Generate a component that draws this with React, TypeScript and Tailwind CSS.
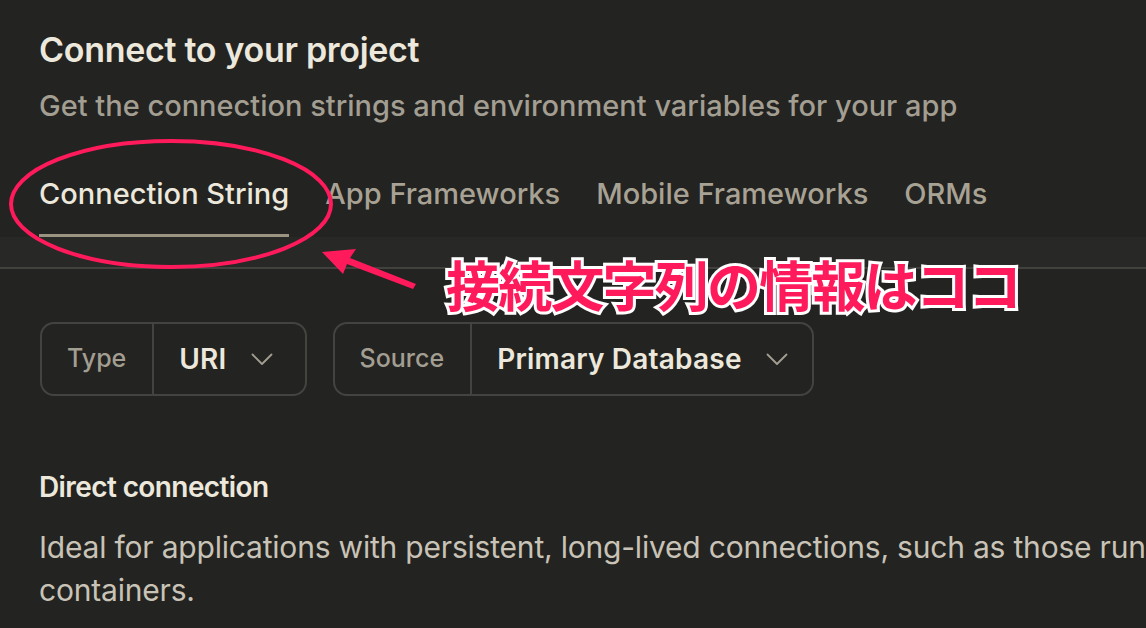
const tabs = ['Connection String', 'App Frameworks', 'Mobile Frameworks', 'ORMs']

function Chevron() {
  return (
    <svg width="22" height="13" viewBox="0 0 22 13" fill="none" className="shrink-0">
      <polyline points="1.5,1.5 11,11 20.5,1.5" stroke="#a39e92" strokeWidth="1.8" strokeLinecap="round" strokeLinejoin="round" />
    </svg>
  )
}

function Selector({ label, value, pr }: { label: string; value: string; pr: string }) {
  return (
    <div className="flex h-[74px] items-stretch rounded-[14px] border-2 border-[#434340]">
      <div className="flex items-center pl-[25px] pr-[26px] text-[25px] font-medium text-[#a39e92]">{label}</div>
      <div className={`flex items-center gap-[24px] border-l-2 border-[#434340] pl-[25px] ${pr}`}>
        <span className="text-[28px] font-semibold tracking-[0.2px] text-[#ede8dc]">{value}</span>
        <Chevron />
      </div>
    </div>
  )
}

export default function App() {
  return (
    <div
      className="relative h-[628px] w-[1146px] overflow-hidden bg-[#232321]"
      style={{ fontFamily: 'Inter, "Noto Sans", sans-serif' }}
    >
      <div className="px-[39px] pt-[30px]">
        <h1 className="text-[34px] font-semibold leading-[40px] tracking-[-0.3px] text-[#ede8dc]">
          Connect to your project
        </h1>
        <p className="mt-[18px] text-[29px] font-medium leading-[36px] text-[#a39e92]">
          Get the connection strings and environment variables for your app
        </p>
      </div>

      <div className="mt-[52px] flex gap-[36px] px-[39px]">
        {tabs.map((t, i) => (
          <div
            key={t}
            className={
              i === 0
                ? 'border-b-[3px] border-[#9b9382] pb-[22px] text-[29px] font-medium leading-[36px] text-[#ede8dc]'
                : 'pb-[25px] text-[29px] font-medium leading-[36px] text-[#a8a294]'
            }
          >
            {t}
          </div>
        ))}
      </div>
      <div className="h-[32px] border-b-2 border-[#41413e] bg-[#282826]" />

      <div className="mt-[53px] flex gap-[26px] px-[40px]">
        <Selector label="Type" value="URI" pr="pr-[32px]" />
        <Selector label="Source" value="Primary Database" pr="pr-[24px]" />
      </div>

      <div className="px-[39px] pt-[74px]">
        <h2 className="text-[28px] font-semibold leading-[34px] tracking-[-0.6px] text-[#ede8dc]">
          Direct connection
        </h2>
        <p className="mt-[22px] whitespace-nowrap text-[30px] leading-[43px] tracking-[-0.2px] text-[#c9c3b7]">
          Ideal for applications with persistent, long-lived connections, such as those running on virtual machines or long-standing
          <br />
          containers.
        </p>
      </div>

      {/* annotation overlay */}
      <svg className="pointer-events-none absolute left-0 top-0" width="1146" height="628" viewBox="0 0 1146 628">
        <ellipse cx="171" cy="204" rx="160" ry="63" fill="none" stroke="#ff1a5c" strokeWidth="4" />
        <path d="M322 252 L356 249 L350 258 L416 284 L413 289 L347 264 L343 274 Z" fill="#ff1a5c" />
      </svg>
      <div
        className="absolute left-[446px] top-[252px] text-[54px] font-bold leading-[64px] tracking-[-1.8px] text-[#ff1a5c] [paint-order:stroke_fill] [-webkit-text-stroke:6px_#ffffff]"
        style={{ fontFamily: '"Noto Sans CJK JP", sans-serif' }}
      >
        接続文字列の情報はココ
      </div>
    </div>
  )
}
